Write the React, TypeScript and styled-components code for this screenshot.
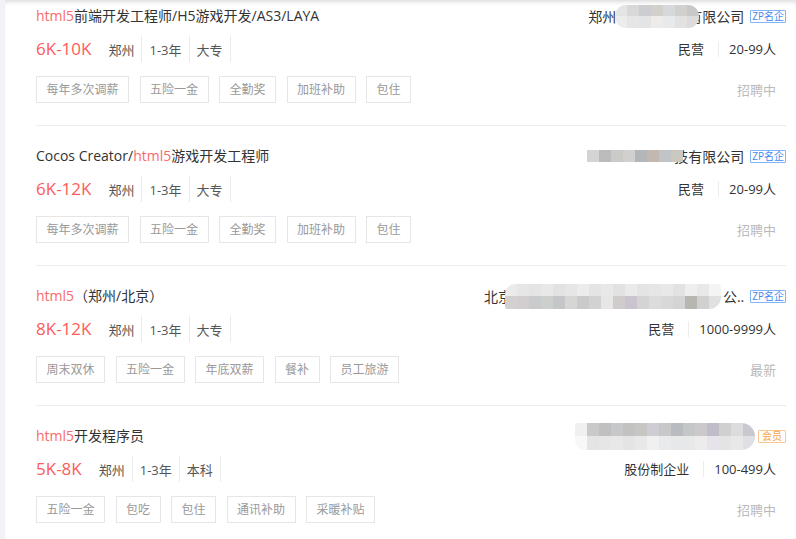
import * as React from 'react'
import styled, { createGlobalStyle } from 'styled-components'

const GlobalStyle = createGlobalStyle`
  html, body {
    margin: 0;
    padding: 0;
    background: #fff;
  }
  body {
    font-family: "Open Sans", "Noto Sans CJK SC", sans-serif;
    color: #333;
  }
`

const Shell = styled.div`
  display: flex;
  height: 539px;
  background: #f2f3f6;
  padding-left: 5px;
`

const Panel = styled.div`
  flex: 1;
  overflow: hidden;
  background: #fff;
  box-shadow: inset 0 4px 4px -2px rgba(0, 0, 0, 0.14);
`

const List = styled.div`
  margin-top: -14px;
  padding: 0 10px 0 31px;
`

const Item = styled.div`
  padding: 19px 0 22px;
  border-bottom: 1px solid #ececec;
`

const Line = styled.div<{ $h: number; $mt?: number }>`
  display: flex;
  justify-content: space-between;
  align-items: center;
  height: ${p => p.$h}px;
  margin-top: ${p => p.$mt || 0}px;
`

const Title = styled.div`
  font-size: 14px;
  line-height: 22px;
  color: #333;
  white-space: nowrap;
`

const Hl = styled.span`
  color: #fa6a6a;
`

const Meta = styled.div`
  display: flex;
  align-items: stretch;
  height: 100%;
`

const Salary = styled.span`
  font-size: 17px;
  line-height: 26px;
  color: #fd5c5c;
  margin-right: 10px;
`

const MetaItem = styled.span`
  display: flex;
  align-items: center;
  font-size: 13px;
  color: #555;
  padding: 0 7px;
  border-right: 1px solid #ebebeb;
`

const Tags = styled.div`
  display: flex;
  gap: 10.5px;
`

const Tag = styled.span`
  font-size: 12px;
  line-height: 25px;
  height: 25px;
  padding: 0 9.5px;
  color: #999;
  border: 1px solid #e6e6e6;
  white-space: nowrap;
`

const Company = styled.div`
  display: flex;
  align-items: center;
  font-size: 14px;
  color: #333;
  white-space: nowrap;
`

const Mosaic = styled.span<{ $cols: number; $cellH: number; $radius: string; $ml?: number; $mr?: number }>`
  position: relative;
  display: inline-grid;
  grid-template-columns: repeat(${p => p.$cols}, 12px);
  grid-auto-rows: ${p => p.$cellH}px;
  border-radius: ${p => p.$radius};
  overflow: hidden;
  filter: blur(0.5px);
  margin-left: ${p => p.$ml || 0}px;
  margin-right: ${p => p.$mr || 0}px;
`

const Badge = styled.span<{ $kind: 'zp' | 'vip' }>`
  margin-left: 6px;
  font-size: 10px;
  line-height: 11px;
  padding: 0 ${p => (p.$kind === 'zp' ? 1 : 3)}px;
  border-radius: 1px;
  color: ${p => (p.$kind === 'zp' ? '#3f8cee' : '#f5a245')};
  border: 1px solid ${p => (p.$kind === 'zp' ? '#80b4f4' : '#fbc68e')};
`

const Info = styled.div`
  display: flex;
  align-items: center;
  font-size: 13px;
  color: #333;
  padding-right: 10px;
`

const InfoItem = styled.span`
  padding: 0 10px;
  line-height: 16px;

  &:first-child {
    padding-right: 14px;
    border-right: 1px solid #ececec;
  }
  &:last-child {
    padding-right: 0;
  }
`

const Status = styled.span`
  font-size: 13px;
  color: #bbb;
  padding-right: 10px;
`

type MosaicSpec = { rows: string[]; cellH: number; radius: string; ml?: number; mr?: number }
type Part = string | MosaicSpec

interface Job {
  title: { text: string; hl?: boolean }[]
  salary: string
  meta: string[]
  tags: string[]
  company: Part[]
  badge: 'zp' | 'vip'
  kind: string
  size: string
  status: string
}

const jobs: Job[] = [
  {
    title: [{ text: 'html5', hl: true }, { text: '前端开发工程师/H5游戏开发/AS3/LAYA' }],
    salary: '6K-10K',
    meta: ['郑州', '1-3年', '大专'],
    tags: ['每年多次调薪', '五险一金', '全勤奖', '加班补助', '包住'],
    company: [
      '郑州',
      {
        rows: [
          '#e4e4e4 #d8d8d8 #cbcdd0 #d3d0cc #d6d8da #d2d0cc #c8c8c8',
          '#ececec #e6e6e6 #e2e4e6 #eeeceb #e7e9ea #e4e2e0 #dcdcdc',
        ],
        cellH: 11.5,
        radius: '11px',
        ml: -1,
        mr: -11,
      },
      '有限公司',
    ],
    badge: 'zp',
    kind: '民营',
    size: '20-99人',
    status: '招聘中',
  },
  {
    title: [{ text: 'Cocos Creator/' }, { text: 'html5', hl: true }, { text: '游戏开发工程师' }],
    salary: '6K-12K',
    meta: ['郑州', '1-3年', '大专'],
    tags: ['每年多次调薪', '五险一金', '全勤奖', '加班补助', '包住'],
    company: [
      {
        rows: ['#d4d4d4 #bcbcbc #cacac6 #d0d0d0 #b3b6b8 #c2b8b0 #c0c4c6 #cbc8c0'],
        cellH: 12,
        radius: '0',
        mr: -9,
      },
      '技有限公司',
    ],
    badge: 'zp',
    kind: '民营',
    size: '20-99人',
    status: '招聘中',
  },
  {
    title: [{ text: 'html5', hl: true }, { text: '（郑州/北京）' }],
    salary: '8K-12K',
    meta: ['郑州', '1-3年', '大专'],
    tags: ['周末双休', '五险一金', '年底双薪', '餐补', '员工旅游'],
    company: [
      '北京',
      {
        rows: [
          '#ebebeb #e6e6e6 #e4e4e4 #e8e8e8 #e2e2e2 #e6e6e6 #ececec #e4e4e4 #e8e8e8 #e2e2e2 #eaeaea #e4e4e4 #e6e6e6 #e8e8e8 #e2e2e2 #eeeeee #e8e8e8 #f4f4f4',
          '#d4d0d0 #d4cdd0 #c8cacb #ccd0cc #c4c6c8 #d6d6d4 #cacaca #d2d2d2 #e6e6e6 #d0cccc #c9c4cf #d4d4d4 #dcdcdc #d8d8d8 #d4d4d4 #b8b6b0 #d0d0d0 #e0e0e0',
        ],
        cellH: 12.5,
        radius: '10px 4px 12px 2px',
        ml: -7,
        mr: 2,
      },
      '公..',
    ],
    badge: 'zp',
    kind: '民营',
    size: '1000-9999人',
    status: '最新',
  },
  {
    title: [{ text: 'html5', hl: true }, { text: '开发程序员' }],
    salary: '5K-8K',
    meta: ['郑州', '1-3年', '本科'],
    tags: ['五险一金', '包吃', '包住', '通讯补助', '采暖补贴'],
    company: [
      {
        rows: [
          '#f0f0f0 #c9c9c9 #c0c0c0 #c6c8c9 #c2c2c0 #c8c6c4 #d0ccd4 #c8c8c8 #b8bcc0 #c4c6c8 #ccc8cc #c0bcc8 #d0d0d0 #dcdcdc #c8c8d0',
          '#f8f8f8 #e4e4e4 #e6e6e6 #e8e8e8 #e4e4e4 #e8e8e8 #f0f0f0 #e8eaec #e6e8ea #e8e8e8 #ececec #e6e4ea #e4e4e4 #e8e8e8 #e0e0e4',
        ],
        cellH: 13.5,
        radius: '2px 14px 14px 10px',
        mr: -3,
      },
    ],
    badge: 'vip',
    kind: '股份制企业',
    size: '100-499人',
    status: '招聘中',
  },
]

function renderMosaic(m: MosaicSpec, key: number) {
  const cells = m.rows.map(r => r.split(' '))
  return (
    <Mosaic key={key} $cols={cells[0].length} $cellH={m.cellH} $radius={m.radius} $ml={m.ml} $mr={m.mr}>
      {cells.flat().map((c, i) => (
        <span key={i} style={{ background: c }} />
      ))}
    </Mosaic>
  )
}

export default function App() {
  return (
    <>
      <GlobalStyle />
      <Shell>
        <Panel>
          <List>
            {jobs.map((job, i) => (
              <Item key={i}>
                <Line $h={22}>
                  <Title>
                    {job.title.map((t, j) => (t.hl ? <Hl key={j}>{t.text}</Hl> : <span key={j}>{t.text}</span>))}
                  </Title>
                  <Company>
                    {job.company.map((p, j) => (typeof p === 'string' ? <span key={j}>{p}</span> : renderMosaic(p, j)))}
                    <Badge $kind={job.badge}>{job.badge === 'zp' ? 'ZP名企' : '会员'}</Badge>
                  </Company>
                </Line>
                <Line $h={26} $mt={9}>
                  <Meta>
                    <Salary>{job.salary}</Salary>
                    {job.meta.map(m => (
                      <MetaItem key={m}>{m}</MetaItem>
                    ))}
                  </Meta>
                  <Info>
                    <InfoItem>{job.kind}</InfoItem>
                    <InfoItem>{job.size}</InfoItem>
                  </Info>
                </Line>
                <Line $h={27} $mt={14}>
                  <Tags>
                    {job.tags.map(t => (
                      <Tag key={t}>{t}</Tag>
                    ))}
                  </Tags>
                  <Status>{job.status}</Status>
                </Line>
              </Item>
            ))}
          </List>
        </Panel>
      </Shell>
    </>
  )
}
